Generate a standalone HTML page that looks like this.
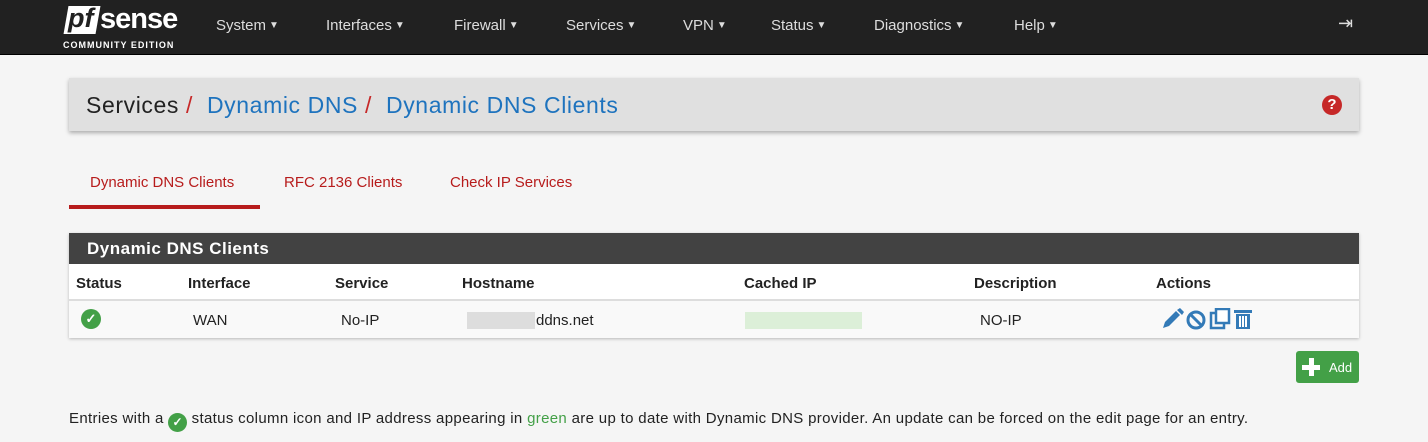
<!DOCTYPE html><html><head><style>
body{margin:0;width:1428px;height:442px;background:#f5f5f5;font-family:"Liberation Sans",sans-serif;position:relative;overflow:hidden;color:#222}
.nav{position:absolute;left:0;top:0;width:1428px;height:54px;background:#212121;border-bottom:1px solid #000}
.nav .m{position:absolute;top:17px;color:#ddd;font-size:15px}
.nav .m i{font-style:normal;font-size:10px;vertical-align:2px;margin-left:3px}
.abs{position:absolute}
</style></head><body>
<div class="nav">
<div class="abs" style="left:66px;top:6px;width:32px;height:28px;background:#fff;transform:skewX(-10deg)"></div>
<div class="abs" style="left:68px;top:3px;font-size:27px;font-weight:bold;font-style:italic;color:#212121">pf</div>
<div class="abs" style="left:100px;top:3px;font-size:29px;font-weight:bold;color:#fff;letter-spacing:-1px">sense</div>
<div class="abs" style="left:63px;top:40px;font-size:9px;font-weight:bold;color:#fff;letter-spacing:1px">COMMUNITY EDITION</div>
<span class="m" style="left:216px">System<i>▼</i></span>
<span class="m" style="left:326px">Interfaces<i>▼</i></span>
<span class="m" style="left:454px">Firewall<i>▼</i></span>
<span class="m" style="left:566px">Services<i>▼</i></span>
<span class="m" style="left:683px">VPN<i>▼</i></span>
<span class="m" style="left:771px">Status<i>▼</i></span>
<span class="m" style="left:874px">Diagnostics<i>▼</i></span>
<span class="m" style="left:1014px">Help<i>▼</i></span>
<span class="m" style="left:1338px;top:13px;font-size:18px">⇥</span>
</div>
<div class="abs" style="left:69px;top:78px;width:1290px;height:53px;background:#e0e0e0;box-shadow:0 2px 4px rgba(0,0,0,.3)"></div>
<div class="abs" style="left:86px;top:92px;font-size:23px;letter-spacing:0.6px;color:#222">Services <span style="color:#c62828">/</span> <span style="color:#1e73be">&nbsp;Dynamic DNS</span> <span style="color:#c62828">/</span> <span style="color:#1e73be">&nbsp;Dynamic DNS Clients</span></div>
<div class="abs" style="left:1322px;top:95px;width:20px;height:20px;border-radius:50%;background:#c62828;color:#fff;font-size:15px;font-weight:bold;text-align:center;line-height:20px">?</div>
<div class="abs" style="left:90px;top:174px;font-size:15px;color:#b71c1c">Dynamic DNS Clients</div>
<div class="abs" style="left:69px;top:205px;width:191px;height:4px;background:#b71c1c"></div>
<div class="abs" style="left:284px;top:174px;font-size:15px;color:#b71c1c">RFC 2136 Clients</div>
<div class="abs" style="left:450px;top:174px;font-size:15px;color:#b71c1c">Check IP Services</div>
<div class="abs" style="left:69px;top:233px;width:1290px;height:105px;background:#fff;box-shadow:0 1px 3px rgba(0,0,0,.25)"></div>
<div class="abs" style="left:69px;top:233px;width:1290px;height:31px;background:#424242;color:#fff;font-size:17px;font-weight:bold;letter-spacing:.5px;line-height:31px;text-indent:18px">Dynamic DNS Clients</div>
<div class="abs" style="left:69px;top:299px;width:1290px;height:2px;background:#ddd"></div>
<div class="abs" style="left:69px;top:301px;width:1290px;height:37px;background:#f9f9f9"></div>
<div style="font-size:15px;font-weight:bold">
<span class="abs" style="left:76px;top:275px">Status</span><span class="abs" style="left:188px;top:275px">Interface</span><span class="abs" style="left:335px;top:275px">Service</span><span class="abs" style="left:462px;top:275px">Hostname</span><span class="abs" style="left:744px;top:275px">Cached IP</span><span class="abs" style="left:974px;top:275px">Description</span><span class="abs" style="left:1156px;top:275px">Actions</span></div>
<div style="font-size:15px">
<div class="abs" style="left:81px;top:309px;width:20px;height:20px;border-radius:50%;background:#43a047;color:#fff;font-size:13px;text-align:center;line-height:20px;font-weight:bold">✓</div>
<span class="abs" style="left:193px;top:312px">WAN</span><span class="abs" style="left:341px;top:312px">No-IP</span>
<div class="abs" style="left:467px;top:312px;width:68px;height:17px;background:#ddd"></div>
<span class="abs" style="left:536px;top:312px">ddns.net</span>
<div class="abs" style="left:745px;top:312px;width:117px;height:17px;background:#dcefd8"></div>
<span class="abs" style="left:980px;top:312px">NO-IP</span></div>
<svg class="abs" style="left:1160px;top:308px" width="95" height="24" viewBox="0 0 95 24" fill="#337ab7">
<path d="M3 20l2-6 11-11 4 4-11 11z"/><path d="M17 2l3-2 4 4-2 3z"/>
<circle cx="36" cy="12" r="8" fill="none" stroke="#337ab7" stroke-width="3"/><path d="M30 6l12 12" stroke="#337ab7" stroke-width="3"/>
<rect x="51" y="5" width="13" height="15" fill="none" stroke="#337ab7" stroke-width="2.5"/><rect x="56" y="1" width="13" height="14" fill="#fff" stroke="#337ab7" stroke-width="2.5"/>
<rect x="74" y="2" width="18" height="3"/><rect x="76" y="6" width="14" height="15"/><rect x="79" y="8" width="2" height="11" fill="#fff"/><rect x="82" y="8" width="2" height="11" fill="#fff"/><rect x="85" y="8" width="2" height="11" fill="#fff"/></svg>
<div class="abs" style="left:1296px;top:351px;width:63px;height:32px;background:#43a047;border-radius:3px;color:#fff;font-size:13px">
<div class="abs" style="left:6px;top:14px;width:18px;height:5px;background:#fff"></div><div class="abs" style="left:13px;top:7px;width:5px;height:18px;background:#fff"></div>
<span class="abs" style="left:33px;top:9px">Add</span></div>
<div class="abs" style="left:69px;top:410px;font-size:15px;letter-spacing:0.33px">Entries with a <span style="display:inline-block;width:19px;height:19px;border-radius:50%;background:#43a047;color:#fff;font-size:12px;text-align:center;line-height:19px;vertical-align:-3px;font-weight:bold">✓</span> status column icon and IP address appearing in <span style="color:#43a047">green</span> are up to date with Dynamic DNS provider. An update can be forced on the edit page for an entry.</div>
</body></html>
